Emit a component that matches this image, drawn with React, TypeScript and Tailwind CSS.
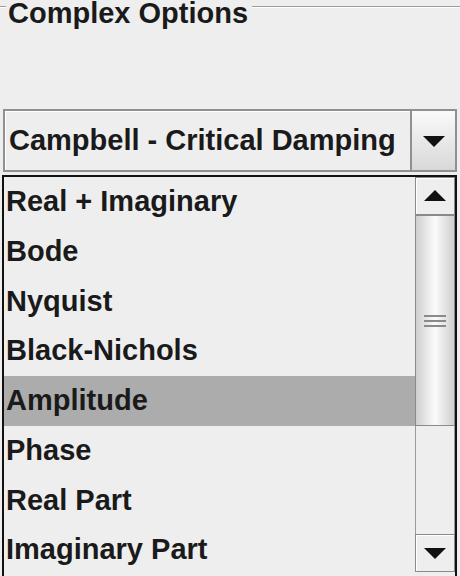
import React from "react";

const ITEMS = [
  "Real + Imaginary",
  "Bode",
  "Nyquist",
  "Black-Nichols",
  "Amplitude",
  "Phase",
  "Real Part",
  "Imaginary Part",
];
const SELECTED = 4;

function Tri({ up }: { up?: boolean }) {
  return (
    <svg width="22" height="12" viewBox="0 0 22 12">
      {up ? <path d="M0 11 L11 0 L22 11 Z" fill="#111" /> : <path d="M0 1 L22 1 L11 12 Z" fill="#111" />}
    </svg>
  );
}

function ScrollButton({ up }: { up?: boolean }) {
  return (
    <div className="h-[38px] shrink-0 border border-[#8a8a8a] shadow-[inset_1px_1px_0_#ffffff] bg-[#eeeeee] flex items-center justify-center">
      <Tri up={up} />
    </div>
  );
}

export default function App() {
  return (
    <div
      className="w-[460px] h-[576px] overflow-hidden bg-[#eeeeee] text-[#1a1a1a]"
      style={{ fontFamily: '"Liberation Sans", Arial, sans-serif' }}
    >
      {/* titled border */}
      <div className="flex items-start h-[24px]">
        <div className="w-[6px] mt-[6px] border-t border-[#9c9c9c] border-b border-b-white" />
        <div className="px-[2px] -mt-[1px] text-[29px] leading-[29px] font-bold">
          Complex Options
        </div>
        <div className="flex-1 ml-[2px] mt-[6px] border-t border-[#9c9c9c] border-b border-b-white" />
      </div>

      {/* combo box */}
      <div className="ml-[3px] mr-[3px] mt-[85px] h-[63px] flex border-2 border-[#909090] shadow-[inset_1px_1px_0_#ffffff]">
        <div className="flex-1 flex items-center pl-[4px] text-[29px] font-bold whitespace-nowrap">
          Campbell - Critical Damping
        </div>
        <div className="w-[45px] border-l-2 border-[#909090] bg-gradient-to-b from-[#fafafa] to-[#d8d8d8] flex items-center justify-center">
          <Tri />
        </div>
      </div>

      {/* popup list */}
      <div className="ml-[2px] mr-[3px] mt-[3px] h-[410px] border-2 border-[#111111] flex">
        <div className="flex-1 flex flex-col">
          {ITEMS.map((t, i) => (
            <div
              key={t}
              className={
                "h-[49.75px] shrink-0 flex items-center pl-[2px] text-[29px] font-bold whitespace-nowrap " +
                (i === SELECTED ? "bg-[#acacac]" : "")
              }
            >
              {t}
            </div>
          ))}
        </div>
        <div className="w-[40px] flex flex-col">
          <ScrollButton up />
          <div className="h-[211px] shrink-0 border border-[#8a8a8a] bg-gradient-to-r from-[#cfcfcf] via-[#fbfbfb] to-[#d0d0d0] flex items-center justify-center">
            <div className="flex flex-col gap-[3px]">
              <div className="w-[22px] h-[2px] bg-[#8a8a8a]" />
              <div className="w-[22px] h-[2px] bg-[#8a8a8a]" />
              <div className="w-[22px] h-[2px] bg-[#8a8a8a]" />
            </div>
          </div>
          <div className="h-[108px] shrink-0 border-x border-[#9a9a9a] bg-[#eeeeee]" />
          <ScrollButton />
        </div>
      </div>
    </div>
  );
}
